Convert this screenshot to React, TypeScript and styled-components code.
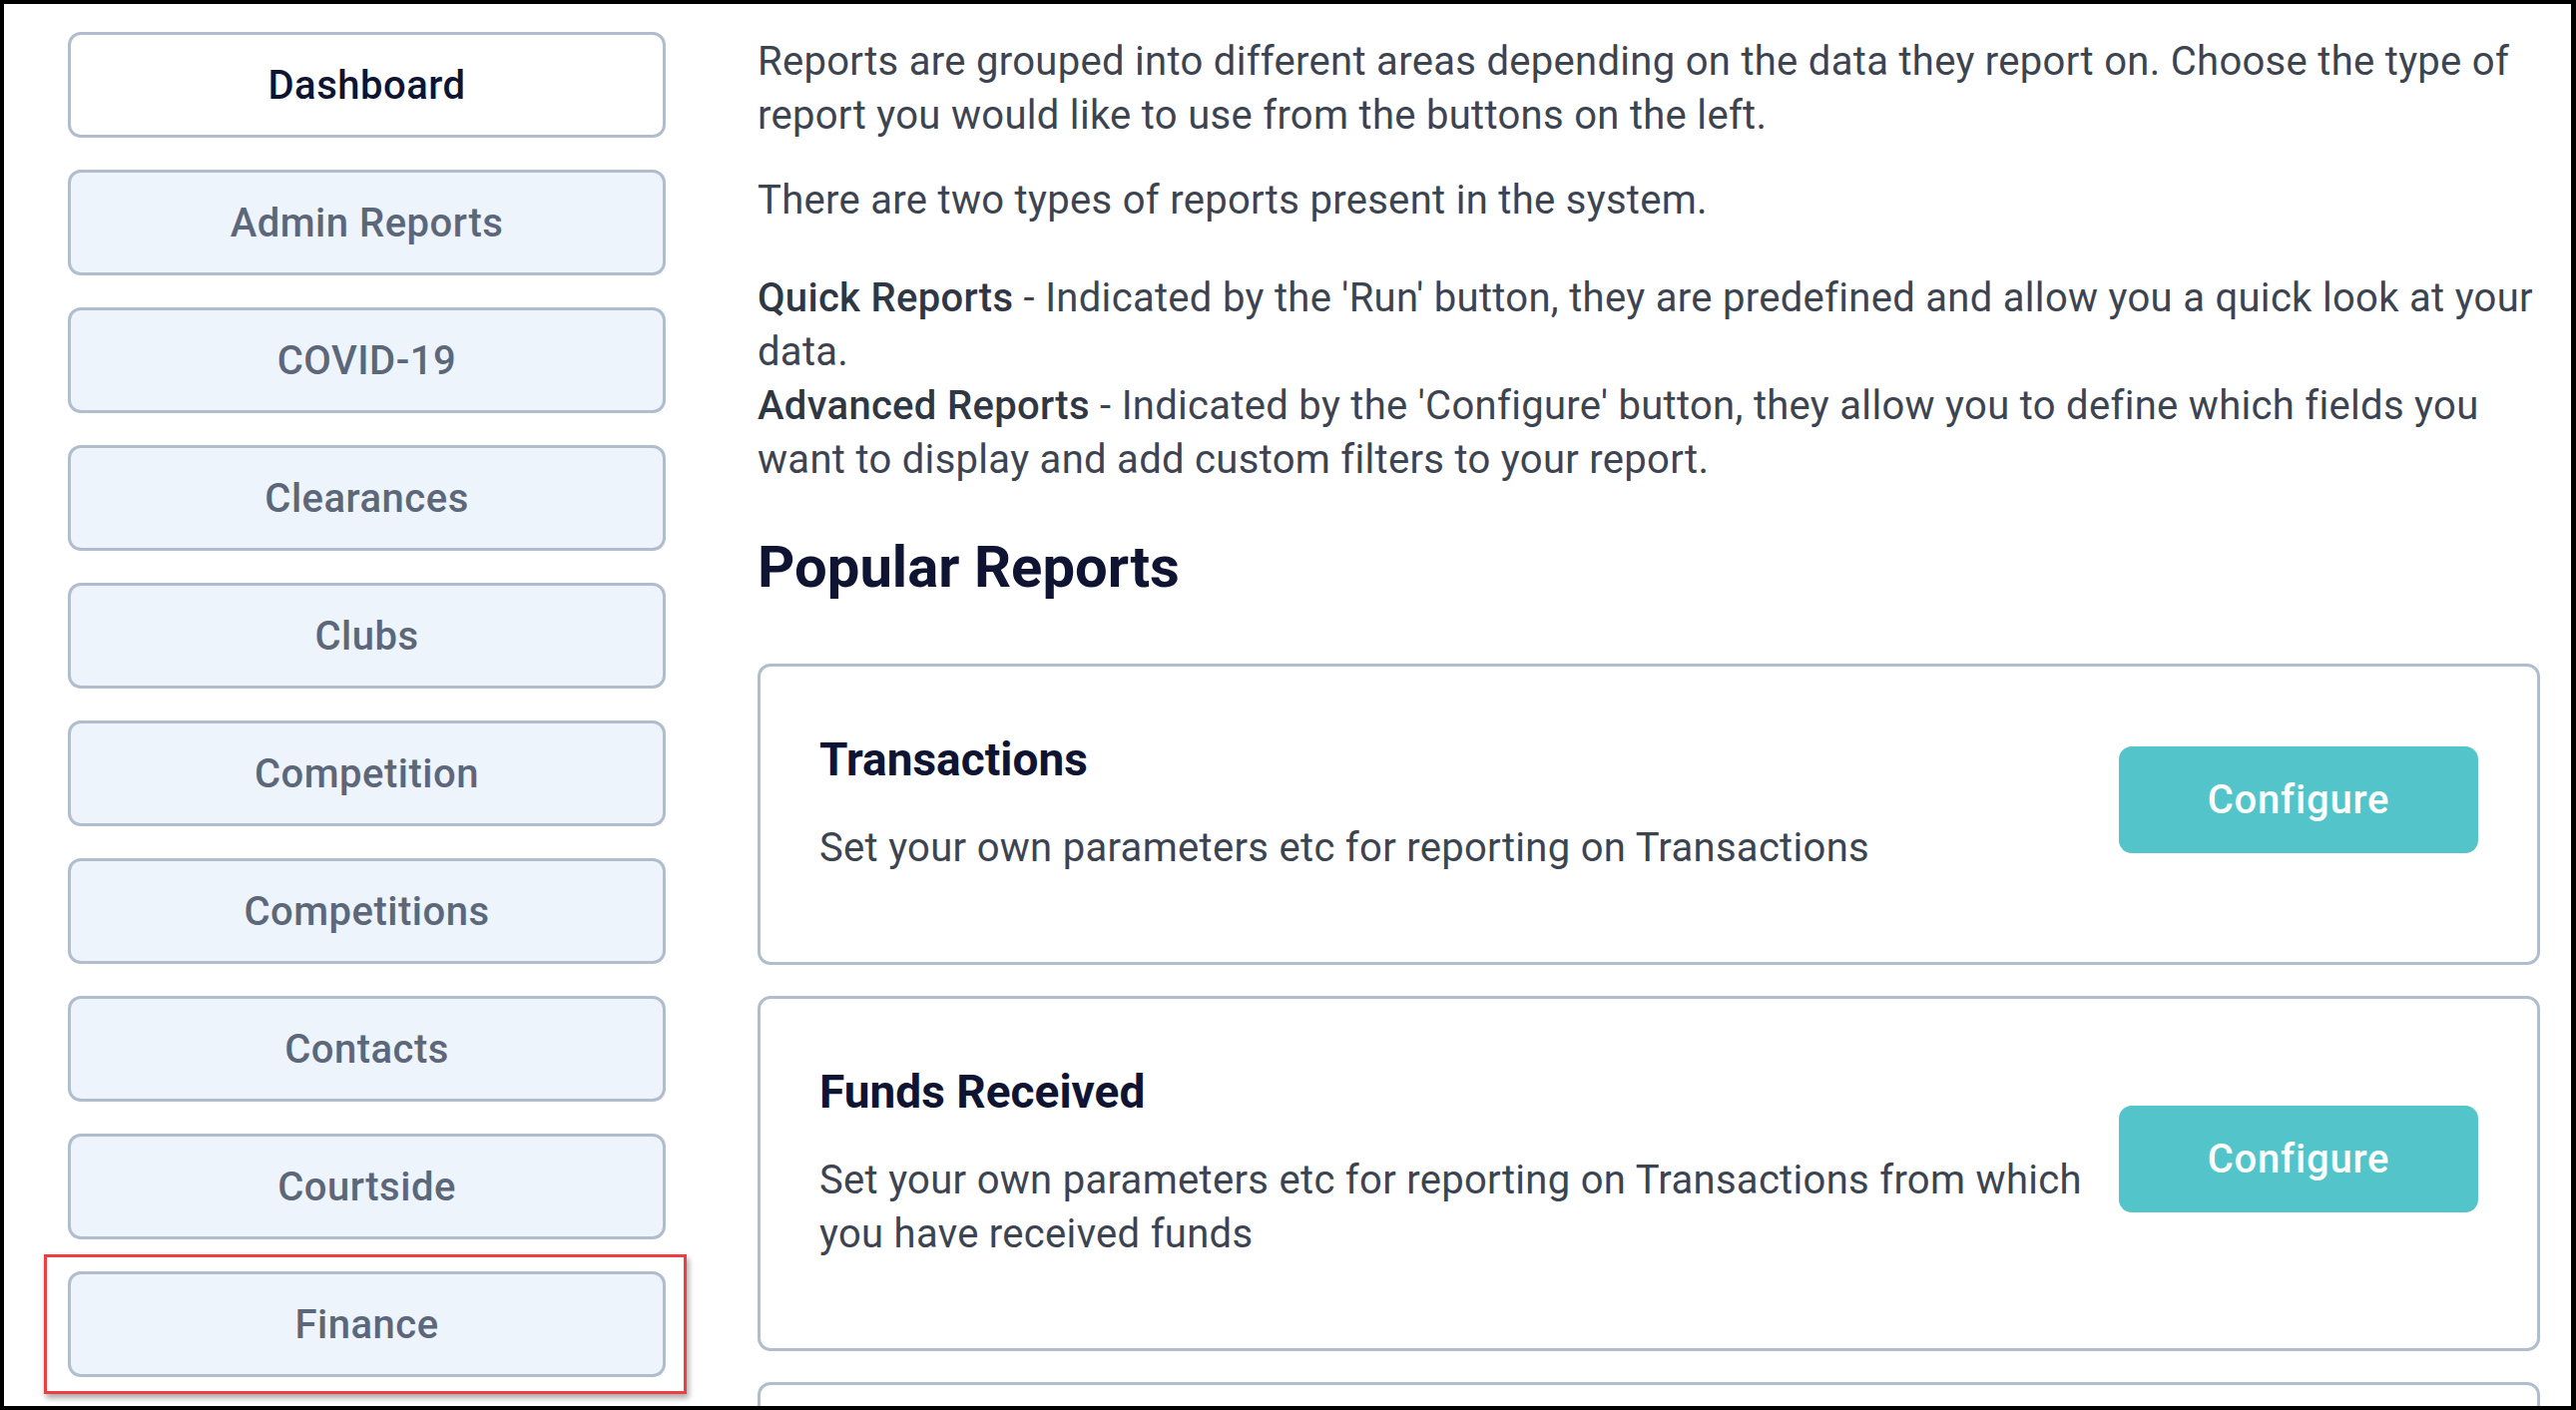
import React from "react";
import styled, { createGlobalStyle } from "styled-components";

const GlobalStyle = createGlobalStyle`
  html, body {
    margin: 0;
    padding: 0;
    background: #fff;
  }
  * {
    box-sizing: border-box;
  }
  body {
    font-family: Roboto, "Liberation Sans", sans-serif;
    color: #3d4451;
  }
`;

const Frame = styled.div`
  height: 100vh;
  border: 4px solid #000;
  border-right-width: 5px;
  overflow: hidden;
  padding: 28px 32px 0 64px;
  display: grid;
  grid-template-columns: 599px 1786px;
  column-gap: 92px;
  align-items: start;
`;

const Sidebar = styled.nav`
  display: flex;
  flex-direction: column;
  gap: 32px;
`;

const NavButton = styled.button<{ $active?: boolean }>`
  height: 106px;
  width: 100%;
  border: 3px solid #b1bdcc;
  border-radius: 13px;
  background: ${(p) => (p.$active ? "#fff" : "#eef4fb")};
  color: ${(p) => (p.$active ? "#0f1432" : "#5c677a")};
  font-family: Roboto, sans-serif;
  font-size: 40px;
  font-weight: 500;
  letter-spacing: 0.5px;
  display: flex;
  align-items: center;
  justify-content: center;
  cursor: pointer;
`;

const Highlight = styled.div`
  position: relative;

  &::after {
    content: "";
    position: absolute;
    top: -17px;
    bottom: -17px;
    left: -24px;
    right: -21px;
    border: 3px solid #ef3e42;
    box-shadow: 2px 4px 6px rgba(0, 0, 0, 0.35);
    pointer-events: none;
  }
`;

const Main = styled.main`
  margin-top: 3px;
`;

const Text = styled.p<{ $gap?: number }>`
  margin: 0 0 ${(p) => p.$gap ?? 0}px;
  font-size: 40px;
  line-height: 54px;
  letter-spacing: 0.3px;
  color: #3d4451;
`;

const Strong = styled.span`
  font-weight: 500;
  color: #2f3745;
`;

const Heading = styled.h2`
  margin: 45px 0 62px;
  font-size: 58px;
  line-height: 70px;
  font-weight: 700;
  color: #0f1432;
`;

const CardList = styled.div`
  display: flex;
  flex-direction: column;
  gap: 31px;
`;

const Card = styled.div`
  border: 3px solid #b1bdcc;
  border-radius: 13px;
  padding: 57px 59px 87px;
  display: flex;
  align-items: center;
  gap: 12px;
`;

const CardText = styled.div`
  flex: 1;
`;

const CardTitle = styled.h3`
  margin: 0 0 26px;
  font-size: 46px;
  line-height: 72px;
  font-weight: 700;
  color: #0f1432;
`;

const CardDesc = styled.p`
  margin: 0;
  font-size: 40px;
  line-height: 54px;
  letter-spacing: 0.3px;
  color: #3d4451;
`;

const ConfigureButton = styled.button`
  flex: none;
  width: 360px;
  height: 107px;
  border: none;
  border-radius: 13px;
  background: #53c5ca;
  color: #fff;
  font-family: Roboto, sans-serif;
  font-size: 40px;
  font-weight: 500;
  letter-spacing: 0.8px;
  cursor: pointer;
`;

const navItems = [
  "Dashboard",
  "Admin Reports",
  "COVID-19",
  "Clearances",
  "Clubs",
  "Competition",
  "Competitions",
  "Contacts",
  "Courtside",
];

const reports = [
  {
    title: "Transactions",
    desc: "Set your own parameters etc for reporting on Transactions",
  },
  {
    title: "Funds Received",
    desc: "Set your own parameters etc for reporting on Transactions from which you have received funds",
  },
  {
    title: "Members",
    desc: "Set your own parameters etc for reporting on Members",
  },
];

const App: React.FC = () => {
  return (
    <>
      <GlobalStyle />
      <Frame>
        <Sidebar>
          {navItems.map((item, i) => (
            <NavButton key={item} $active={i === 0}>
              {item}
            </NavButton>
          ))}
          <Highlight>
            <NavButton>Finance</NavButton>
          </Highlight>
        </Sidebar>
        <Main>
          <Text $gap={31}>
            Reports are grouped into different areas depending on the data they report on. Choose the type of
            report you would like to use from the buttons on the left.
          </Text>
          <Text $gap={44}>There are two types of reports present in the system.</Text>
          <Text>
            <Strong>Quick Reports</Strong> - Indicated by the 'Run' button, they are predefined and allow you a
            quick look at your data.
            <br />
            <Strong>Advanced Reports</Strong> - Indicated by the 'Configure' button, they allow you to define which
            fields you want to display and add custom filters to your report.
          </Text>
          <Heading>Popular Reports</Heading>
          <CardList>
            {reports.map((r) => (
              <Card key={r.title}>
                <CardText>
                  <CardTitle>{r.title}</CardTitle>
                  <CardDesc>{r.desc}</CardDesc>
                </CardText>
                <ConfigureButton>Configure</ConfigureButton>
              </Card>
            ))}
          </CardList>
        </Main>
      </Frame>
    </>
  );
};

export default App;
